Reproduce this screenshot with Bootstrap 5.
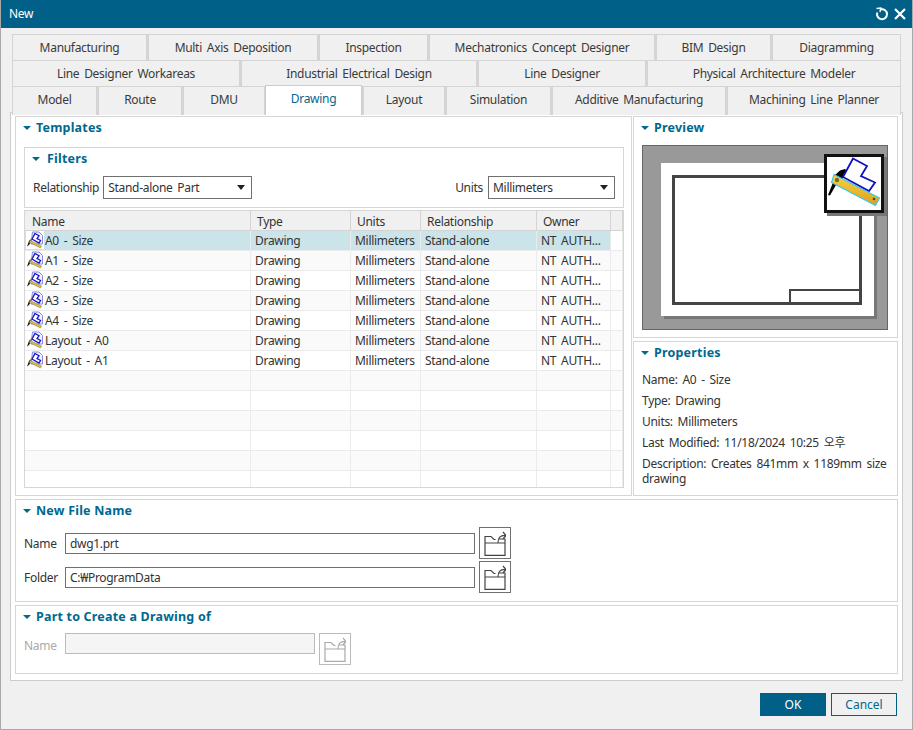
<!doctype html>
<html lang="en"><head><meta charset="utf-8"><title>New</title>
<link rel="stylesheet" href="https://cdn.jsdelivr.net/npm/bootstrap@5.3.0/dist/css/bootstrap.min.css">
<style>
html,body{height:730px;overflow:hidden}
body{background:#f0f0f0;font:12px/16px "Noto Sans","Noto Sans CJK KR",sans-serif;letter-spacing:-.3px;word-spacing:2px;color:#333;border-left:1px solid #a9a9a9;border-right:1px solid #a9a9a9;border-bottom:1px solid #a9a9a9}
.titlebar{height:28px;margin:0 -1px;background:#006088;color:#fff;padding:0 6px 0 9px}
.tabstrip{padding:6px 11px 0 11px;position:relative;z-index:2;height:85px}
.tabrow{display:grid;height:26px}
.r1{grid-template-columns:135px 171px 110px 227px 116px 130px}
.r2{grid-template-columns:228px 237px 169px 255px}
.r3{grid-template-columns:85px 85px 83px 97px 83px 106px 175px 175px}
.tabcell{background:#f0f0f0;border:1px solid #d4d4d4;border-left-width:2px;border-bottom-width:0;text-align:center;line-height:26px;color:#3a3a3a;white-space:nowrap;overflow:hidden}
.tabcell:first-child{border-left-width:1px}
.tabcell.on{background:#fff;color:#00688f;border:1px solid #ccc;border-bottom:0;margin-top:-1px;height:30px;position:relative;z-index:3;line-height:25px}
.panelbox{margin:-1px 9px 0 9px;height:569px;background:#fff;border:1px solid #ccc;padding:3px 4px;display:grid;grid-template-columns:617px 265px;column-gap:1px;grid-template-rows:380px 103px 69px;row-gap:3px}
.grp{border:1px solid #d6d6d6;padding:2px 8px;min-width:0}
.gleft{padding-right:7px}
.sidecol{display:flex;flex-direction:column;gap:3px}
.gpreview{height:222px}
.gprops{height:155px}
.span2{grid-column:1/3}
.grouphd{font-weight:700;color:#00688f;font-size:12.5px;letter-spacing:.2px;word-spacing:0;height:17px;line-height:17px;display:flex;align-items:center}
.tri{width:0;height:0;border-left:4px solid transparent;border-right:4px solid transparent;border-top:4px solid #00688f;margin:0 5px 0 -1px}
.filterbox{border:1px solid #d6d6d6;height:61px;margin-top:11px;padding:2px 8px;}
.filterbox .grouphd{margin-bottom:9px}
.filterbox .tri{margin:0 7px 0 -1px}
.combo{height:23px;border:1px solid #707070;padding:0 5px 0 4px;display:flex;align-items:center;justify-content:space-between;background:#fff}
.combo.c1{width:149px;margin-left:4px}
.combo.c2{width:127px;margin-left:5px}
.combo .caret{width:0;height:0;border-left:4px solid transparent;border-right:4px solid transparent;border-top:5px solid #222;margin-right:1px}
.gridbox{margin-top:2px;border:1px solid #d6d6d6;height:278px;overflow:hidden}
.tb{table-layout:fixed;width:598px;margin:0;border-collapse:separate;border-spacing:0;--bs-table-bg:transparent}
.tb col:nth-child(1){width:226px}.tb col:nth-child(2){width:100px}.tb col:nth-child(3){width:70px}.tb col:nth-child(4){width:116px}.tb col:nth-child(5){width:74px}.tb col:nth-child(6){width:12px}
.tb th,.tb td{padding:0 0 0 4px;height:20px;line-height:19px;font-weight:400;white-space:nowrap;overflow:hidden;border-bottom:1px solid #ebebeb;border-right:1px solid #ebebeb;color:#333;font-size:12px;background:#fff;box-shadow:none}
.tb th{background:#f0f0f0;border-bottom:1px solid #d4d4d4;border-right:1px solid #d4d4d4;padding:2px 0 0 6px;line-height:17px;vertical-align:top}
.tb th:first-child{padding-left:7px}
.tb tr:nth-child(even) td{background:#fafafa}
.tb tr.sel td{background:#cae4ea}
.tb tr td:first-child{padding-left:1px}
.tb tr td.blankc{background:#fff!important}
.rowicon{width:18px;height:18px;vertical-align:-4px;margin-right:1px;background:#fff}
.previewbox{margin-top:9px;height:185px;background:#999;border:1px solid #666;margin-right:1px;padding:17px 13px 13px 18px;position:relative}
.paper{width:213px;height:153px;background:#fff;box-shadow:3px 3px 0 #777;padding:12px 12px 11px 11px}
.sheet{width:190px;height:130px;border:3px solid #444;display:flex;align-items:flex-end;justify-content:flex-end}
.titleblk{width:70px;height:13px;border:2px solid #444;border-width:2px 0 0 2px}
.badgeicon{position:absolute;top:8px;right:3px;width:60px;height:59px;border:3px solid #111;background:#fff;box-shadow:3px 3px 0 #777}
.badgeicon svg{display:block}
.props{margin-top:11px;line-height:15px}
.props div{margin-bottom:6px}
.fields{margin-top:8px;display:flex;flex-direction:column;gap:2px}
.frow{height:32px}
.fname{width:41px;flex:none;padding-top:2px}
.finput{height:21px;border:1px solid #707070;width:410px;padding:0 4px;line-height:19px;background:#fff}
.browse{width:32px;height:32px;border:1px solid #707070;margin-left:4px;display:flex;align-items:center;justify-content:center;background:#fff;color:#444}
.browse svg{width:22px;height:25px}
.off .browse{border-color:#bbb;color:#aaa}
.off .fname{color:#aaa;line-height:21px}
.off .finput{background:#f5f5f5;border-color:#bbb;width:250px}
.footer{padding:12px 15px 0 0;gap:5px}
.btnok,.btncancel{width:66px;height:23px;border-radius:0;padding:0;font-size:12px;line-height:20px;border:1px solid #006088}
.btnok{background:#006088;color:#fff}
.btncancel{background:#f0f0f0;color:#00688f}
</style></head><body>
<svg width="0" height="0" class="position-absolute">
<symbol id="tplicon" viewBox="0 0 18 18">
<path d="M6.500 1h6.500l3.500 3.500V13H5z" fill="#f2f2fc" stroke="#8a8adc"/>
<path d="M9 2.500 13 4.800 11 7.500 14.500 9.500 13 12 6 8z" fill="#fff" stroke="#1414c8" stroke-width="1.300"/>
<path d="M4.500 8 3 10 1 15.500 3 14 5 10.500z" fill="#111"/>
<path d="M4 9.500 15.500 15 14.500 17 3.500 11.500z" fill="#e6b836" stroke="#8c8c64" stroke-width=".6"/>
</symbol>
<symbol id="foldericon" viewBox="0 0 22 25">
<path d="M1 12V5.500h6l3 3h1.500M1 12h20v12.300H1zM15 8h6v4" fill="none" stroke="currentColor" stroke-width="1.200"/>
<path d="M14 12c0-5 2-8 8-7.500M19 1l3 3.500-3 3.500" fill="none" stroke="currentColor" stroke-width="1.200"/>
</symbol>
</svg>

<div class="titlebar d-flex align-items-center justify-content-between">
<span>New</span>
<span class="d-flex align-items-center gap-1">
<svg width="14" height="14" viewBox="0 0 14 14" fill="none" stroke="#fff" stroke-width="2"><path d="M6 2.300A5 5 0 1 1 2.300 5.500"/><path d="M1.500 1.500 5.800 1 5 5" stroke-width="1.400"/></svg>
<svg width="14" height="14" viewBox="0 0 14 14" stroke="#fff" stroke-width="2.200"><path d="M2 2 12 12M12 2 2 12"/></svg>
</span>
</div>

<div class="tabstrip">
<div class="tabrow r1"><div class="tabcell">Manufacturing</div><div class="tabcell">Multi Axis Deposition</div><div class="tabcell">Inspection</div><div class="tabcell">Mechatronics Concept Designer</div><div class="tabcell">BIM Design</div><div class="tabcell">Diagramming</div></div>
<div class="tabrow r2"><div class="tabcell">Line Designer Workareas</div><div class="tabcell">Industrial Electrical Design</div><div class="tabcell">Line Designer</div><div class="tabcell">Physical Architecture Modeler</div></div>
<div class="tabrow r3"><div class="tabcell">Model</div><div class="tabcell">Route</div><div class="tabcell">DMU</div><div class="tabcell on">Drawing</div><div class="tabcell">Layout</div><div class="tabcell">Simulation</div><div class="tabcell">Additive Manufacturing</div><div class="tabcell">Machining Line Planner</div></div>
</div>

<div class="panelbox">
<section class="grp gleft">
<div class="grouphd"><i class="tri"></i>Templates</div>
<div class="filterbox">
<div class="grouphd"><i class="tri"></i>Filters</div>
<div class="d-flex align-items-center justify-content-between">
<div class="d-flex align-items-center"><span>Relationship</span><div class="combo c1"><span>Stand-alone Part</span><i class="caret"></i></div></div>
<div class="d-flex align-items-center"><span>Units</span><div class="combo c2"><span>Millimeters</span><i class="caret"></i></div></div>
</div>
</div>
<div class="gridbox">
<table class="table tb">
<colgroup><col><col><col><col><col><col></colgroup>
<thead><tr><th>Name</th><th>Type</th><th>Units</th><th>Relationship</th><th>Owner</th><th></th></tr></thead>
<tbody>
<tr class="sel"><td><svg class="rowicon"><use href="#tplicon"/></svg>A0 - Size</td><td>Drawing</td><td>Millimeters</td><td>Stand-alone</td><td>NT AUTH...</td><td class="blankc"></td></tr>
<tr><td><svg class="rowicon"><use href="#tplicon"/></svg>A1 - Size</td><td>Drawing</td><td>Millimeters</td><td>Stand-alone</td><td>NT AUTH...</td><td></td></tr>
<tr><td><svg class="rowicon"><use href="#tplicon"/></svg>A2 - Size</td><td>Drawing</td><td>Millimeters</td><td>Stand-alone</td><td>NT AUTH...</td><td></td></tr>
<tr><td><svg class="rowicon"><use href="#tplicon"/></svg>A3 - Size</td><td>Drawing</td><td>Millimeters</td><td>Stand-alone</td><td>NT AUTH...</td><td></td></tr>
<tr><td><svg class="rowicon"><use href="#tplicon"/></svg>A4 - Size</td><td>Drawing</td><td>Millimeters</td><td>Stand-alone</td><td>NT AUTH...</td><td></td></tr>
<tr><td><svg class="rowicon"><use href="#tplicon"/></svg>Layout - A0</td><td>Drawing</td><td>Millimeters</td><td>Stand-alone</td><td>NT AUTH...</td><td></td></tr>
<tr><td><svg class="rowicon"><use href="#tplicon"/></svg>Layout - A1</td><td>Drawing</td><td>Millimeters</td><td>Stand-alone</td><td>NT AUTH...</td><td></td></tr>
<tr><td></td><td></td><td></td><td></td><td></td><td></td></tr>
<tr><td></td><td></td><td></td><td></td><td></td><td></td></tr>
<tr><td></td><td></td><td></td><td></td><td></td><td></td></tr>
<tr><td></td><td></td><td></td><td></td><td></td><td></td></tr>
<tr><td></td><td></td><td></td><td></td><td></td><td></td></tr>
<tr><td></td><td></td><td></td><td></td><td></td><td></td></tr>
</tbody></table>
</div>
</section>

<div class="sidecol">
<section class="grp gpreview">
<div class="grouphd"><i class="tri"></i>Preview</div>
<div class="previewbox"><div class="paper"><div class="sheet"><div class="titleblk"></div></div></div>
<div class="badgeicon"><svg width="54" height="53" viewBox="0 0 54 53">
<defs><linearGradient id="rul" x1="0" y1="0" x2="0" y2="1"><stop offset="0" stop-color="#f4d348"/><stop offset="1" stop-color="#e0a01c"/></linearGradient></defs>
<path d="M18 12 13 13.500 8 18 5 28 1 38 3 38.500 9 28 15 23 20 14z" fill="#000"/>
<path d="M26 1.500 40 9 34 19 48 25.500 42 34 16 20z" fill="#fff" stroke="#1010c0" stroke-width="1.800"/>
<path d="M7 17.500 52.500 41 48.500 48.500 4.500 25.500z" fill="url(#rul)" stroke="#35c8ea" stroke-width="1.100"/>
<circle cx="10" cy="23" r="2.200" fill="#7a6a30"/><circle cx="47" cy="42" r="1.300" fill="#444"/>
</svg></div>
</div>
</section>
<section class="grp gprops">
<div class="grouphd"><i class="tri"></i>Properties</div>
<div class="props">
<div>Name: A0 - Size</div><div>Type: Drawing</div><div>Units: Millimeters</div><div>Last Modified: 11/18/2024 10:25 오후</div><div>Description: Creates 841mm x 1189mm size drawing</div>
</div>
</section>
</div>

<section class="grp span2">
<div class="grouphd"><i class="tri"></i>New File Name</div>
<div class="fields">
<div class="frow d-flex align-items-center"><span class="fname">Name</span><div class="finput">dwg1.prt</div><div class="browse"><svg><use href="#foldericon"/></svg></div></div>
<div class="frow d-flex align-items-center"><span class="fname">Folder</span><div class="finput">C:₩ProgramData</div><div class="browse"><svg><use href="#foldericon"/></svg></div></div>
</div>
</section>

<section class="grp span2">
<div class="grouphd"><i class="tri"></i>Part to Create a Drawing of</div>
<div class="fields off">
<div class="frow d-flex align-items-start"><span class="fname">Name</span><div class="finput"></div><div class="browse"><svg><use href="#foldericon"/></svg></div></div>
</div>
</section>
</div>

<div class="footer d-flex justify-content-end">
<button type="button" class="btn btnok">OK</button>
<button type="button" class="btn btncancel">Cancel</button>
</div>
</body></html>
